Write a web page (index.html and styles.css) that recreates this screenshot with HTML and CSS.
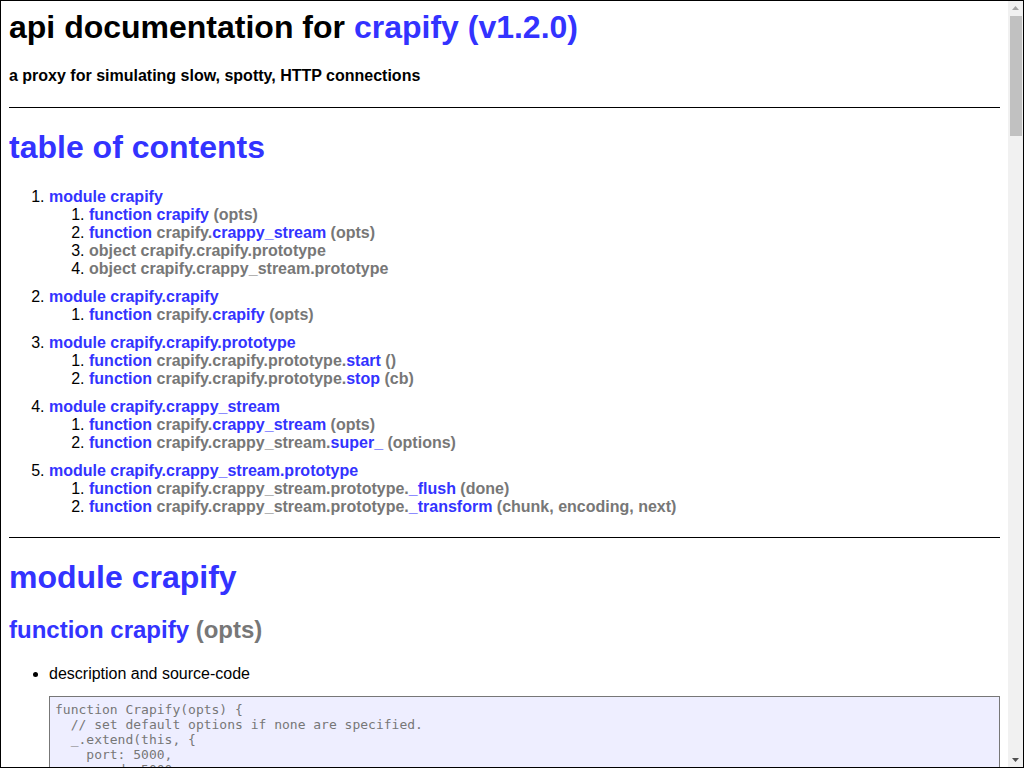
FILE: index.html
```html
<!DOCTYPE html>
<html lang="en">
<head>
<meta charset="utf-8">
<title>api documentation for crapify (v1.2.0)</title>
<link rel="stylesheet" href="styles.css">
</head>
<body>
<div class="scrollbar" aria-hidden="true">
  <div class="sb-btn"><svg width="7" height="4" viewBox="0 0 7 4"><path d="M0 4L3.5 0L7 4Z" fill="#a3a3a3"/></svg></div>
  <div class="sb-thumb"></div>
  <div class="sb-space"></div>
  <div class="sb-btn"><svg width="7" height="4" viewBox="0 0 7 4"><path d="M0 0L3.5 4L7 0Z" fill="#505050"/></svg></div>
</div>
<div class="doc">
<h1 class="title">api documentation for <a class="link" href="#top">crapify (v1.2.0)</a></h1>
<h4 class="subtitle">a proxy for simulating slow, spotty, HTTP connections</h4>

<div class="section">
<h1 class="section-title"><a class="link" href="#toc" id="toc">table of contents</a></h1>
<ol class="toc">
  <li class="toc-mod"><a class="link" href="#m1">module crapify</a>
    <ol class="toc-sub">
      <li><a class="link" href="#e1">function <span class="sig"></span>crapify <span class="sig">(opts)</span></a></li>
      <li><a class="link" href="#e2">function <span class="sig">crapify.</span>crappy_stream <span class="sig">(opts)</span></a></li>
      <li><span class="sig">object crapify.crapify.prototype</span></li>
      <li><span class="sig">object crapify.crappy_stream.prototype</span></li>
    </ol>
  </li>
  <li class="toc-mod"><a class="link" href="#m2">module crapify.crapify</a>
    <ol class="toc-sub">
      <li><a class="link" href="#e3">function <span class="sig">crapify.</span>crapify <span class="sig">(opts)</span></a></li>
    </ol>
  </li>
  <li class="toc-mod"><a class="link" href="#m3">module crapify.crapify.prototype</a>
    <ol class="toc-sub">
      <li><a class="link" href="#e4">function <span class="sig">crapify.crapify.prototype.</span>start <span class="sig">()</span></a></li>
      <li><a class="link" href="#e5">function <span class="sig">crapify.crapify.prototype.</span>stop <span class="sig">(cb)</span></a></li>
    </ol>
  </li>
  <li class="toc-mod"><a class="link" href="#m4">module crapify.crappy_stream</a>
    <ol class="toc-sub">
      <li><a class="link" href="#e6">function <span class="sig">crapify.</span>crappy_stream <span class="sig">(opts)</span></a></li>
      <li><a class="link" href="#e7">function <span class="sig">crapify.crappy_stream.</span>super_ <span class="sig">(options)</span></a></li>
    </ol>
  </li>
  <li class="toc-mod"><a class="link" href="#m5">module crapify.crappy_stream.prototype</a>
    <ol class="toc-sub">
      <li><a class="link" href="#e8">function <span class="sig">crapify.crappy_stream.prototype.</span>_flush <span class="sig">(done)</span></a></li>
      <li><a class="link" href="#e9">function <span class="sig">crapify.crappy_stream.prototype.</span>_transform <span class="sig">(chunk, encoding, next)</span></a></li>
    </ol>
  </li>
</ol>
</div>

<div class="section">
<h1 class="mod-title"><a class="link" href="#m1" id="m1">module crapify</a></h1>
<h2 class="el-title"><a class="link" href="#e1" id="e1">function <span class="sig"></span>crapify <span class="sig">(opts)</span></a></h2>
<ul class="el-list">
<li>description and source-code<pre class="code">function Crapify(opts) {
  // set default options if none are specified.
  _.extend(this, {
    port: 5000,
    speed: 5000,
    concurrency: 5,
    drop_frequency: 0,
    response_code: 500,
    respond: true
  }, opts);
}</pre></li>
<li>example usage<pre class="code">...
var _ = require('lodash'),
  http = require('http'),
  httpProxy = require('http-proxy'),
  CrappyStream = require('./crappy-stream'),
  url = require('url');

function Crapify(opts) {
  // set default options if none are specified.
  _.extend(this, {
    port: 5000,
    speed: 5000,
...</pre></li>
</ul>
<h2 class="el-title"><a class="link" href="#e2" id="e2">function <span class="sig">crapify.</span>crappy_stream <span class="sig">(opts)</span></a></h2>
<ul class="el-list">
<li>description and source-code<pre class="code">function CrappyStream(opts) {
  _.extend(this, {
    speed: 5000,
    drop_frequency: 0
  }, opts);

  stream.Transform.call(this, opts);
}</pre></li>
<li>example usage<pre class="code">...
var _ = require('lodash'),
  stream = require('stream'),
  util = require('util');

function CrappyStream(opts) {
  _.extend(this, {
    speed: 5000,
...</pre></li>
</ul>
</div>

<div class="section">
<h1 class="mod-title"><a class="link" href="#m2" id="m2">module crapify.crapify</a></h1>
<h2 class="el-title"><a class="link" href="#e3" id="e3">function <span class="sig">crapify.</span>crapify <span class="sig">(opts)</span></a></h2>
<ul class="el-list">
<li>description and source-code<pre class="code">function Crapify(opts) {
  // set default options if none are specified.
  _.extend(this, {
    port: 5000,
    speed: 5000,
    concurrency: 5,
    drop_frequency: 0,
    response_code: 500,
    respond: true
  }, opts);
}</pre></li>
<li>example usage<pre class="code">...
var _ = require('lodash'),
  http = require('http'),
  httpProxy = require('http-proxy'),
  CrappyStream = require('./crappy-stream'),
  url = require('url');
...</pre></li>
</ul>
</div>

<div class="section">
<h1 class="mod-title"><a class="link" href="#m3" id="m3">module crapify.crapify.prototype</a></h1>
<h2 class="el-title"><a class="link" href="#e4" id="e4">function <span class="sig">crapify.crapify.prototype.</span>start <span class="sig">()</span></a></h2>
<ul class="el-list">
<li>description and source-code<pre class="code">function () {
  var _this = this,
    proxy = httpProxy.createProxyServer({});

  this.server = http.createServer(function(req, res) {
    var crappyStream = new CrappyStream(_this);

    if (_this.shouldDrop()) return res.end();

    proxy.web(req, res, {
      target: req.url,
      buffer: crappyStream
    });
  }).listen(this.port);
}</pre></li>
<li>example usage<pre class="code">...
  Crapify.prototype.start = function() {
    var _this = this,
...</pre></li>
</ul>
<h2 class="el-title"><a class="link" href="#e5" id="e5">function <span class="sig">crapify.crapify.prototype.</span>stop <span class="sig">(cb)</span></a></h2>
<ul class="el-list">
<li>description and source-code<pre class="code">function (cb) {
  this.server.close(cb);
}</pre></li>
<li>example usage<pre class="code">...
  Crapify.prototype.stop = function(cb) {
    this.server.close(cb);
  };
...</pre></li>
</ul>
</div>

<div class="section">
<h1 class="mod-title"><a class="link" href="#m4" id="m4">module crapify.crappy_stream</a></h1>
<h2 class="el-title"><a class="link" href="#e6" id="e6">function <span class="sig">crapify.</span>crappy_stream <span class="sig">(opts)</span></a></h2>
<ul class="el-list">
<li>description and source-code<pre class="code">function CrappyStream(opts) {
  _.extend(this, {
    speed: 5000,
    drop_frequency: 0
  }, opts);

  stream.Transform.call(this, opts);
}</pre></li>
<li>example usage<pre class="code">...
function CrappyStream(opts) {
  _.extend(this, {
    speed: 5000,
...</pre></li>
</ul>
<h2 class="el-title"><a class="link" href="#e7" id="e7">function <span class="sig">crapify.crappy_stream.</span>super_ <span class="sig">(options)</span></a></h2>
<ul class="el-list">
<li>description and source-code<pre class="code">function Transform(options) {
  if (!(this instanceof Transform))
    return new Transform(options);

  Duplex.call(this, options);

  this._transformState = new TransformState(this);

  // start out asking for a readable event once data is transformed.
  this._readableState.needReadable = true;
  this._readableState.sync = false;

  if (options) {
    if (typeof options.transform === 'function')
      this._transform = options.transform;

    if (typeof options.flush === 'function')
      this._flush = options.flush;
  }

  this.once('prefinish', prefinish);
}</pre></li>
<li>example usage<pre class="code">n/a</pre></li>
</ul>
</div>

<div class="section">
<h1 class="mod-title"><a class="link" href="#m5" id="m5">module crapify.crappy_stream.prototype</a></h1>
<h2 class="el-title"><a class="link" href="#e8" id="e8">function <span class="sig">crapify.crappy_stream.prototype.</span>_flush <span class="sig">(done)</span></a></h2>
<ul class="el-list">
<li>description and source-code<pre class="code">function (done) {
  this.push(null);
  done();
}</pre></li>
<li>example usage<pre class="code">...
  CrappyStream.prototype._flush = function(done) {
    this.push(null);
...</pre></li>
</ul>
<h2 class="el-title"><a class="link" href="#e9" id="e9">function <span class="sig">crapify.crappy_stream.prototype.</span>_transform <span class="sig">(chunk, encoding, next)</span></a></h2>
<ul class="el-list">
<li>description and source-code<pre class="code">function (chunk, encoding, next) {
  var _this = this;

  // slow down the stream to the speed specified.
  setTimeout(function() {
    _this.push(chunk);
    next();
  }, this.delay());
}</pre></li>
<li>example usage<pre class="code">...
  CrappyStream.prototype._transform = function(chunk, encoding, next) {
    var _this = this;
...</pre></li>
</ul>
</div>

<div class="footer">[ this document was created with <a class="link" href="#utility2">utility2</a> ]</div>
</div>
</body>
</html>
```

FILE: styles.css
```css
html {
  height: 100%;
  overflow: hidden;
  background: #fff;
}

body {
  box-sizing: border-box;
  height: 100%;
  margin: 0;
  padding: 8px 23px 8px 8px;
  border: 1px solid #000;
  overflow-y: auto;
  font-family: "Liberation Sans", Arial, sans-serif;
  color: #000;
  background: #fff;
}

/* classic scrollbar drawn over the right edge */
.scrollbar {
  position: fixed;
  top: 1px;
  right: 1px;
  bottom: 1px;
  width: 15px;
  display: flex;
  flex-direction: column;
  background: #f1f1f1;
  z-index: 10;
}

.sb-btn {
  height: 14px;
  display: flex;
  align-items: center;
  justify-content: center;
  flex: none;
}

.sb-btn svg {
  display: block;
}

.sb-thumb {
  height: 120px;
  margin: 1px 1px 0 2px;
  background: #c1c1c1;
  flex: none;
}

.sb-space {
  flex: 1;
}

.link {
  color: #33f;
  font-weight: bold;
  text-decoration: none;
}

.sig {
  color: #777;
  font-weight: bold;
}

.title {
  font-size: 32px;
  margin: 0 0 21.44px;
}

.subtitle {
  font-size: 16px;
  margin: 21.28px 0;
}

.section {
  border-top: 1px solid #000;
  margin-top: 20px;
}

.section-title {
  font-size: 32px;
  margin: 21.44px 0 22px;
}

.mod-title {
  font-size: 32px;
  margin: 20.44px 0 20px;
}

.toc {
  margin: 16px 0 21px;
  padding-left: 40px;
}

.toc-mod {
  margin-top: 10px;
}

.toc-sub {
  margin: 0;
  padding-left: 40px;
}

.el-title {
  font-size: 24px;
  margin: 20px 0 21px;
}

.el-list {
  margin: 16px 0;
  padding-left: 40px;
}

.code {
  margin: 13px 0;
  padding: 5px;
  border: 1px solid;
  color: #777;
  background: #eef;
  font-family: "DejaVu Sans Mono", monospace;
  font-size: 13px;
  white-space: pre-wrap;
}

.footer {
  margin-top: 20px;
  text-align: center;
}
```
